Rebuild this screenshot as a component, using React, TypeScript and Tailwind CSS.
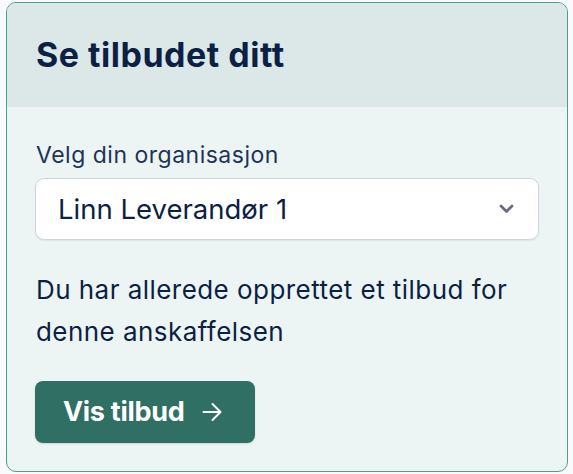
import React from "react";

export default function App() {
  return (
    <div className="min-h-[474px] w-[573px] bg-[#f8fafc] pl-[6px] pr-[5px] pt-[2px] pb-[2px]" style={{ fontFamily: "Inter, 'Noto Sans', sans-serif" }}>
      <div className="h-[470px] overflow-hidden rounded-[10px] border border-[#45a292] bg-[#edf5f4]">
        <div className="flex h-[104px] items-center bg-[#dbe8e7] px-[29px]">
          <h2 className="text-[34px] font-bold leading-none tracking-[0.5px] text-[#0c1f45]">Se tilbudet ditt</h2>
        </div>
        <div className="px-[29px] pt-[34px]">
          <div className="text-[23px] leading-[28px] tracking-[0.5px] text-[#1e3457]">Velg din organisasjon</div>
          <div className="-mx-[1px] mt-[9px] flex h-[62px] items-center justify-between rounded-[9px] border border-[#cfd3dc] bg-white pl-[22px] pr-[24px] shadow-[0_1px_2px_rgba(0,0,0,0.06)]">
            <span className="text-[27.5px] leading-[42px] text-[#0c1f45]">Linn Leverandør 1</span>
            <svg width="15" height="10" viewBox="0 0 15 10" fill="none">
              <path d="M2 2l5.5 5.5L13 2" stroke="#6b6b80" strokeWidth="2.8" strokeLinecap="round" strokeLinejoin="round" />
            </svg>
          </div>
          <p className="mt-[29px] text-[26px] leading-[42px] tracking-[0.45px] text-[#0c1f45]">
            Du har allerede opprettet et tilbud for denne anskaffelsen
          </p>
          <button className="-ml-[1px] mt-[28px] flex h-[62px] w-[220px] items-center rounded-[8px] bg-[#2f6f64] pl-[28px] text-[27px] font-bold leading-[40px] tracking-[-0.3px] text-white shadow-[0_1px_2px_rgba(0,0,0,0.12)]">
            Vis tilbud
            <svg className="ml-[18px]" width="20" height="20" viewBox="0 0 20 20" fill="none">
              <path d="M1.5 10H18.5M10.5 2L18.5 10L10.5 18" stroke="white" strokeWidth="2" strokeLinecap="round" strokeLinejoin="round" />
            </svg>
          </button>
        </div>
      </div>
    </div>
  );
}
